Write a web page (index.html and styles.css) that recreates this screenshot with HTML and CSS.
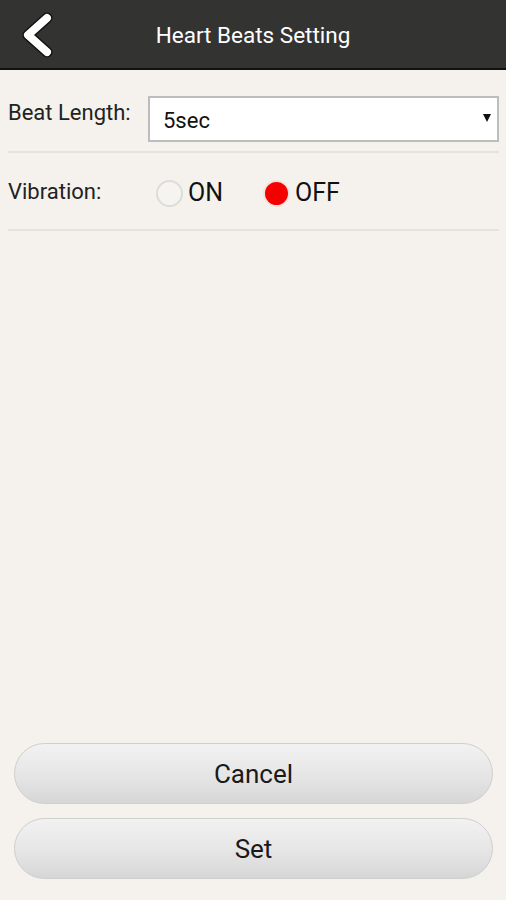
FILE: index.html
```html
<html>
<head>
    <title>Heart Beats Setting</title>
    <link rel="stylesheet" href="styles.css">
</head>
<body>
    <div id="title-bar">
        <div id="back-btn">
            <svg width="36" height="46" viewBox="0 0 36 46">
                <polyline points="28,6 9,23 28,40" fill="none" stroke="#111" stroke-width="11" stroke-linecap="round" stroke-linejoin="round"/>
                <polyline points="28,6 9,23 28,40" fill="none" stroke="#fff" stroke-width="8" stroke-linecap="round" stroke-linejoin="round"/>
            </svg>
        </div>
        <div id="title">Heart Beats Setting</div>
    </div>

    <div id="all">
        <div class="row" id="beat-row">
            <div class="label">Beat Length:</div>
            <div class="select">
                <span>5sec</span>
                <span class="arrow"></span>
            </div>
        </div>

        <div class="row" id="vib-row">
            <div class="label">Vibration:</div>
            <div class="radios">
                <div class="radio"><span class="dot"></span>ON</div>
                <div class="radio on"><span class="dot"></span>OFF</div>
            </div>
        </div>
    </div>

    <div id="buttons">
        <button class="button">Cancel</button>
        <button class="button">Set</button>
    </div>
</body>
</html>
```

FILE: styles.css
```css
body {
    background: #f5f2ee;
    color: #222;
    font-family: Roboto, 'Noto Sans', sans-serif;
    padding: 0px;
    margin: 0px;
    height: 900px;
    display: flex;
    flex-direction: column;
}

#title-bar {
    height: 68px;
    background-color: #333432;
    border-bottom: 2px solid #111;
    display: flex;
    align-items: center;
    justify-content: center;
    position: relative;
}

#back-btn {
    position: absolute;
    left: 19px;
    top: 12px;
}

#back-btn svg {
    display: block;
}

#title {
    color: #fff;
    font-size: 22.5px;
    margin-top: 2px;
}

#all {
    padding: 0px 7px 0px 8px;
    flex: 1;
}

.row {
    display: flex;
    border-bottom: 2px solid #e6e3de;
}

#beat-row {
    height: 55px;
    padding-top: 26px;
    align-items: flex-start;
}

#vib-row {
    height: 76px;
    align-items: center;
}

.label {
    font-size: 22px;
    color: #222;
}

#beat-row .label {
    width: 140px;
    margin-top: 4px;
}

#vib-row .label {
    width: 148px;
}

.select {
    flex: 1;
    height: 42px;
    background: #fff;
    border: 2px solid #bdbdbd;
    display: flex;
    align-items: center;
    justify-content: space-between;
    padding: 0px 6px 0px 13px;
    font-size: 22px;
    color: #111;
}

.select span:first-child {
    margin-top: 2px;
}

.arrow {
    width: 0;
    height: 0;
    border-left: 4px solid transparent;
    border-right: 4px solid transparent;
    border-top: 8px solid #111;
    margin-bottom: 2px;
}

.radios {
    display: flex;
    gap: 40px;
    margin-top: 2px;
}

.radio {
    display: flex;
    align-items: center;
    font-size: 25px;
    color: #111;
}

.dot {
    width: 23px;
    height: 23px;
    border: 2px solid #dedcd8;
    border-radius: 50%;
    margin-right: 5px;
    margin-top: 2px;
    background: #f6f4f0;
}

.radio.on .dot {
    background: #f50000;
    border-color: #f3e2dd;
}

#buttons {
    display: flex;
    flex-direction: column;
    gap: 14px;
    padding: 0px 13px 21px 14px;
}

.button {
    height: 61px;
    border-radius: 31px;
    border: 1px solid #cfcfcf;
    background: linear-gradient(#f2f2f2, #e4e4e4 60%, #d6d6d6);
    font-family: Roboto, 'Noto Sans', sans-serif;
    font-size: 26px;
    color: #1a1a1a;
    cursor: pointer;
}
```
